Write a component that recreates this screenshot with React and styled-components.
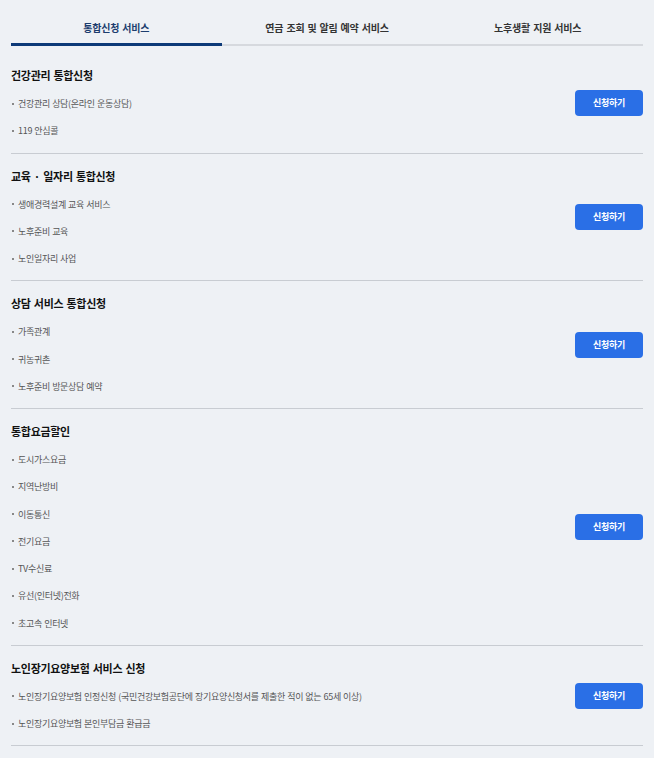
import React, { useState } from 'react';
import styled, { createGlobalStyle } from 'styled-components';

const tabs = ['통합신청 서비스', '연금 조회 및 알림 예약 서비스', '노후생활 지원 서비스'];

const sections = [
    {
        title: '건강관리 통합신청',
        items: ['건강관리 상담(온라인 운동상담)', '119 안심콜'],
    },
    {
        title: '교육 · 일자리 통합신청',
        items: ['생애경력설계 교육 서비스', '노후준비 교육', '노인일자리 사업'],
    },
    {
        title: '상담 서비스 통합신청',
        items: ['가족관계', '귀농귀촌', '노후준비 방문상담 예약'],
    },
    {
        title: '통합요금할인',
        items: ['도시가스요금', '지역난방비', '이동통신', '전기요금', 'TV수신료', '유선(인터넷)전화', '초고속 인터넷'],
    },
    {
        title: '노인장기요양보험 서비스 신청',
        items: [
            '노인장기요양보험 인정신청 (국민건강보험공단에 장기요양신청서를 제출한 적이 없는 65세 이상)',
            '노인장기요양보험 본인부담금 환급금',
        ],
    },
];

export default function App() {
    const [active, setActive] = useState(0);

    return (
        <Page>
            <GlobalStyle />
            <TabList>
                {tabs.map((t, i) => (
                    <Tab key={t} $active={i === active} onClick={() => setActive(i)}>
                        {t}
                    </Tab>
                ))}
            </TabList>

            {sections.map((s) => (
                <Section key={s.title}>
                    <Content>
                        <Title>{s.title}</Title>
                        <ItemList>
                            {s.items.map((it) => (
                                <Item key={it}>{it}</Item>
                            ))}
                        </ItemList>
                    </Content>
                    <ApplyButton>신청하기</ApplyButton>
                </Section>
            ))}
        </Page>
    );
}

const GlobalStyle = createGlobalStyle`
    html, body {
        margin: 0;
        background: #eef1f5;
    }
    body {
        font-family: "Noto Sans CJK KR", "Noto Sans", sans-serif;
    }
`

const Page = styled.div`
    padding: 15px 11px 0;
    background: #eef1f5;
    min-height: 758px;
    box-sizing: border-box;
`

const TabList = styled.div`
    display: grid;
    grid-template-columns: repeat(3, 1fr);
    box-shadow: inset 0 -2px 0 #d6d9de;
    margin-bottom: 7px;
`

const Tab = styled.button`
    height: 31px;
    padding: 0 0 3px;
    border: none;
    border-bottom: 3px solid ${(p) => (p.$active ? '#0d3a78' : 'transparent')};
    background: none;
    font-family: inherit;
    font-size: 10px;
    font-weight: 700;
    letter-spacing: -0.2px;
    word-spacing: 1px;
    color: ${(p) => (p.$active ? '#1c3d6e' : '#333')};
    cursor: pointer;
`

const Section = styled.section`
    display: flex;
    align-items: center;
    justify-content: space-between;
    padding: 8px 0 8px;
    border-bottom: 1px solid #c8ccd2;
`

const Content = styled.div`
    display: flex;
    flex-direction: column;
    gap: 1px;
`

const Title = styled.h3`
    margin: 0;
    font-size: 11px;
    font-weight: 700;
    letter-spacing: -0.3px;
    word-spacing: 1px;
    line-height: 28px;
    color: #111;
`

const ItemList = styled.ul`
    margin: 0;
    padding: 0;
    list-style: none;
`

const Item = styled.li`
    position: relative;
    padding-left: 7px;
    font-size: 9px;
    letter-spacing: -0.3px;
    word-spacing: 0.5px;
    line-height: 27.25px;
    color: #555;

    &::before {
        content: '';
        position: absolute;
        left: 1px;
        top: 50%;
        width: 2px;
        height: 2px;
        margin-top: -1px;
        background: #888;
    }
`

const ApplyButton = styled.button`
    flex: none;
    width: 68px;
    height: 26px;
    border: none;
    border-radius: 4px;
    background: #2a6fe6;
    color: #fff;
    font-family: inherit;
    font-size: 9px;
    font-weight: 700;
    letter-spacing: -0.3px;
    cursor: pointer;
`
